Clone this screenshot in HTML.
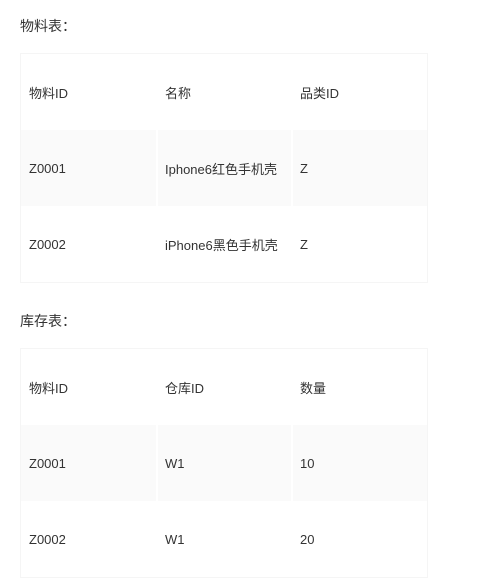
<!DOCTYPE html>
<html><head><meta charset="utf-8"><style>
body{margin:0;background:#fff;font-family:"Liberation Sans","Noto Sans CJK SC",sans-serif;font-size:13px;color:#333;width:488px;height:578px;overflow:hidden;position:relative}
.h{position:absolute;left:20px;font-size:14px}
.c{font-family:"Noto Sans CJK SC",sans-serif}
table{position:absolute;left:20px;width:408px;border-collapse:separate;border-spacing:0;border:1px solid #f5f5f5;table-layout:fixed;box-sizing:border-box}
td{box-sizing:border-box;height:76px;padding:0 0 0 7px;vertical-align:middle;border-left:2px solid #fff}
td:first-child{border-left:none;padding-left:8px}
tr.g td{background:#fafafa}
</style></head><body>
<div class="h" style="top:16px">物料表<span class="c">：</span></div>
<table style="top:53px">
<colgroup><col style="width:135px"><col style="width:135px"><col></colgroup>
<tr><td>物料ID</td><td>名称</td><td>品类ID</td></tr>
<tr class="g"><td>Z0001</td><td>Iphone6红色手机壳</td><td>Z</td></tr>
<tr><td>Z0002</td><td>iPhone6黑色手机壳</td><td>Z</td></tr>
</table>
<div class="h" style="top:311px">库存表<span class="c">：</span></div>
<table style="top:348px">
<colgroup><col style="width:135px"><col style="width:135px"><col></colgroup>
<tr><td>物料ID</td><td>仓库ID</td><td>数量</td></tr>
<tr class="g"><td>Z0001</td><td>W1</td><td>10</td></tr>
<tr><td>Z0002</td><td>W1</td><td>20</td></tr>
</table>
</body></html>
